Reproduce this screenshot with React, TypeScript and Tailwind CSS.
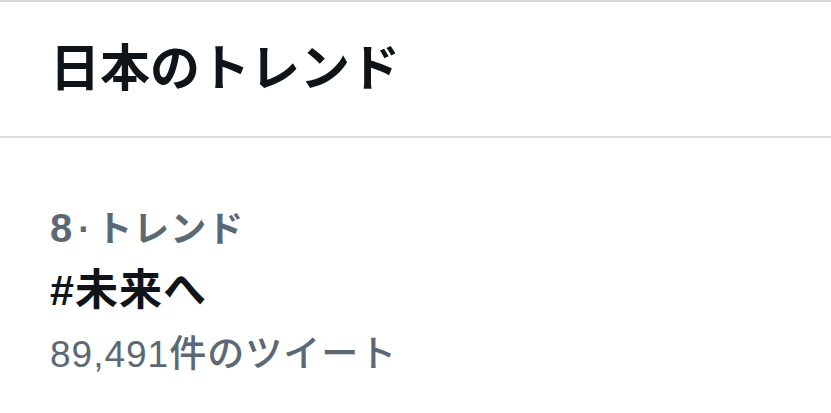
const App = () => {
  return (
    <div className="w-[831px] h-[413px] bg-white overflow-hidden border-t-2 border-[#d3d7da]" style={{ fontFamily: '"Liberation Sans", "Noto Sans CJK JP", sans-serif' }}>
      {/* header */}
      <div className="h-[136px] flex items-center px-[50px] border-b-2 border-[#dadde0]">
        <h2 className="text-[50px] leading-none font-bold text-[#0f1419]">日本のトレンド</h2>
      </div>

      {/* trend item */}
      <div className="px-[50px] pt-[68px]">
        <div className="text-[36px] leading-[44px] font-bold text-[#5b6876] tracking-[1px]">
          <span className="text-[40px]">8</span>
          <span className="mx-[5px]">·</span>トレンド
        </div>
        <div className="mt-[6px] text-[43px] leading-[64px] font-bold text-[#0f1419] tracking-[1px]">#未来へ</div>
        <div className="mt-[4px] text-[37px] leading-[58px] font-medium text-[#5b6876] tracking-[1px]">89,491件のツイート</div>
      </div>
    </div>
  );
};

export default App;
